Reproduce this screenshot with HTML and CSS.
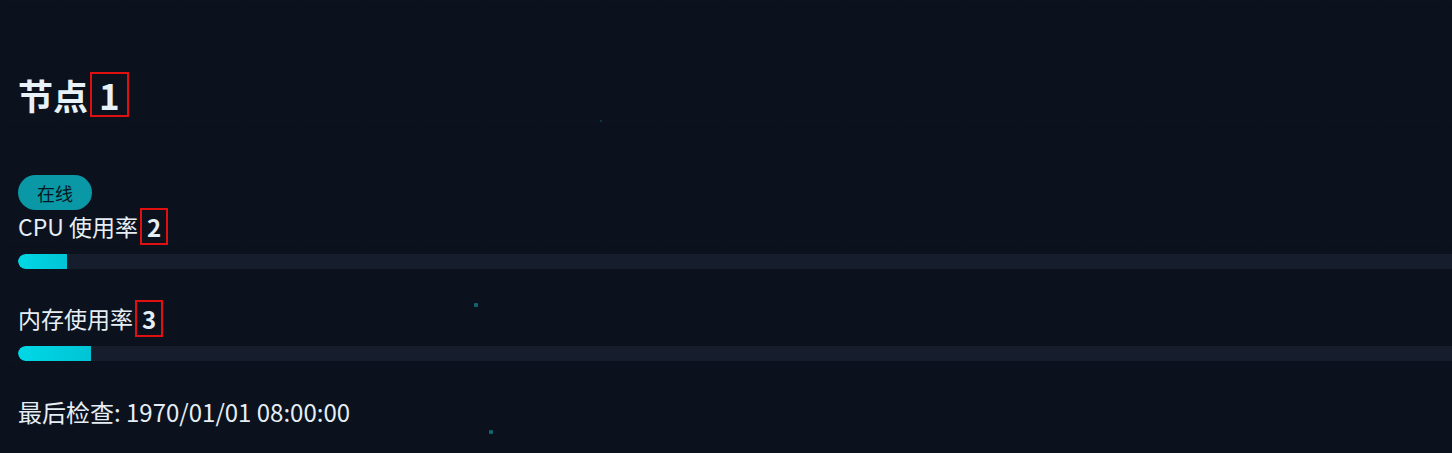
FILE: index.html
```html
<!DOCTYPE html>
<html lang="zh-CN">
<head>
<meta charset="utf-8">
<title>节点</title>
<link rel="stylesheet" href="styles.css">
</head>
<body>
<div class="page">
  <span class="dot dot-a"></span>
  <span class="dot dot-b"></span>
  <span class="dot dot-c"></span>
  <section class="node">
    <h2 class="node-title">节点<span class="mark mark-lg">1</span></h2>
    <span class="badge">在线</span>
    <div class="metric">
      <div class="metric-label">CPU 使用率<span class="mark">2</span></div>
      <div class="bar"><div class="bar-fill" style="width:49px"></div></div>
    </div>
    <div class="metric">
      <div class="metric-label">内存使用率<span class="mark">3</span></div>
      <div class="bar"><div class="bar-fill" style="width:73px"></div></div>
    </div>
    <div class="last-check">最后检查: 1970/01/01 08:00:00</div>
  </section>
</div>
</body>
</html>
```

FILE: styles.css
```css
* { box-sizing: border-box; }
html, body {
  margin: 0;
  padding: 0;
  height: 100%;
  background: #0b121d;
  overflow: hidden;
}
body {
  font-family: "Noto Sans CJK SC", "Noto Sans", sans-serif;
  color: #e6eef5;
}
.page {
  position: relative;
  min-height: 100%;
  background-color: #0b121d;
  background-image:
    linear-gradient(rgba(30, 60, 80, 0.04) 1px, transparent 1px),
    linear-gradient(90deg, rgba(30, 60, 80, 0.04) 1px, transparent 1px);
  background-size: 60px 60px;
  padding: 72px 0 0 18px;
}
.dot {
  position: absolute;
  background: #0f6470;
  border-radius: 1px;
}
.dot-a { left: 600px; top: 120px; width: 2px; height: 2px; background: #0c4450; }
.dot-b { left: 474px; top: 303px; width: 4px; height: 4px; }
.dot-c { left: 489px; top: 430px; width: 4px; height: 4px; }

.node {
  display: flex;
  flex-direction: column;
  align-items: flex-start;
  width: 1452px;
}
.node-title {
  margin: 0;
  font-size: 35px;
  font-weight: 700;
  line-height: 45px;
  height: 45px;
  display: flex;
  align-items: center;
  color: #e8f1f8;
}
.mark {
  display: inline-flex;
  align-items: center;
  justify-content: center;
  border: 2px solid #e01010;
  padding: 0 5px;
  height: 37px;
  font-weight: 700;
  margin-left: 2px;
}
.mark-lg {
  height: 45px;
  padding: 0 7px;
  margin-left: 2px;
}
.badge {
  margin-top: 58px;
  display: inline-flex;
  align-items: center;
  justify-content: center;
  width: 74px;
  height: 35px;
  border-radius: 18px;
  background: #0a97a6;
  color: #041820;
  font-size: 18px;
}
.metric {
  display: flex;
  flex-direction: column;
  width: 100%;
}
.metric-label {
  display: flex;
  align-items: center;
  font-size: 23px;
  line-height: 37px;
  height: 37px;
  color: #e6eef5;
}
.metric-label .mark { font-size: 24px; width: 28px; }
.metric + .metric { margin-top: 31px; }
.metric:first-of-type { margin-top: -2px; }
.bar {
  margin-top: 9px;
  height: 15px;
  width: 100%;
  background: #161e2e;
  border-radius: 8px 0 0 8px;
  overflow: hidden;
}
.bar-fill {
  height: 100%;
  background: linear-gradient(90deg, #00d8e6, #00c4d6);
  border-radius: 8px 0 0 8px;
}
.last-check {
  margin-top: 37px;
  font-size: 24px;
  line-height: 28px;
  color: #e6eef5;
}
```
